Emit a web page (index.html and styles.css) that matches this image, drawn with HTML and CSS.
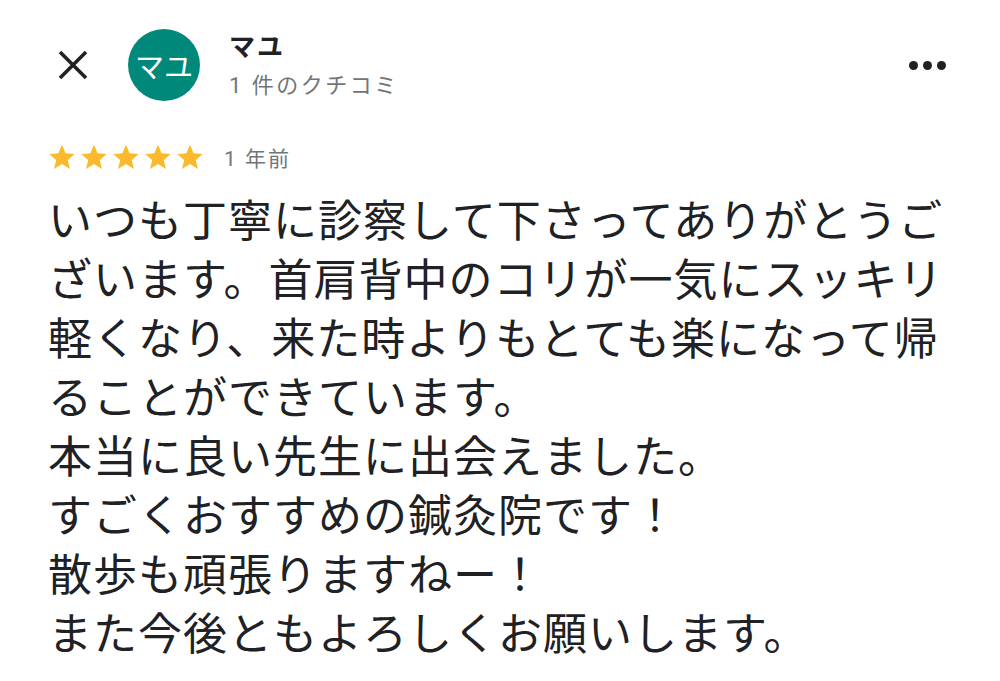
FILE: index.html
```html
<!DOCTYPE html>
<html lang="ja">
<head>
    <meta charset="utf-8">
    <title>クチコミ</title>
    <link rel="stylesheet" href="styles.css">
</head>
<body>
    <!-- ヘッダー -->
    <div class="header">
        <svg class="close" viewBox="0 0 30 30" width="30" height="30">
            <path d="M2 2 L28 28 M28 2 L2 28" stroke="#222" stroke-width="3.6" fill="none"/>
        </svg>
        <div class="avatar">マユ</div>
        <div class="user">
            <div class="name">マユ</div>
            <div class="count">1 件のクチコミ</div>
        </div>
        <div class="more">
            <span></span><span></span><span></span>
        </div>
    </div>

    <!-- 評価 -->
    <div class="rating">
        <div class="stars">
            <svg viewBox="0 0 24 24"><path d="M12 1.5l3.1 7.2 7.8.7-5.9 5.1 1.8 7.7L12 18.1l-6.8 4.1 1.8-7.7-5.9-5.1 7.8-.7z"/></svg>
            <svg viewBox="0 0 24 24"><path d="M12 1.5l3.1 7.2 7.8.7-5.9 5.1 1.8 7.7L12 18.1l-6.8 4.1 1.8-7.7-5.9-5.1 7.8-.7z"/></svg>
            <svg viewBox="0 0 24 24"><path d="M12 1.5l3.1 7.2 7.8.7-5.9 5.1 1.8 7.7L12 18.1l-6.8 4.1 1.8-7.7-5.9-5.1 7.8-.7z"/></svg>
            <svg viewBox="0 0 24 24"><path d="M12 1.5l3.1 7.2 7.8.7-5.9 5.1 1.8 7.7L12 18.1l-6.8 4.1 1.8-7.7-5.9-5.1 7.8-.7z"/></svg>
            <svg viewBox="0 0 24 24"><path d="M12 1.5l3.1 7.2 7.8.7-5.9 5.1 1.8 7.7L12 18.1l-6.8 4.1 1.8-7.7-5.9-5.1 7.8-.7z"/></svg>
        </div>
        <span class="date">1 年前</span>
    </div>

    <!-- 本文 -->
    <div class="review">いつも丁寧に診察して下さってありがとうございます。首肩背中のコリが一気にスッキリ軽くなり、来た時よりもとても楽になって帰ることができています。<br>本当に良い先生に出会えました。<br>すごくおすすめの鍼灸院です！<br>散歩も頑張りますねー！<br>また今後ともよろしくお願いします。</div>
</body>
</html>
```

FILE: styles.css
```css
body {
    margin: 0;
    padding: 0;
    background-color: #fff;
    color: #202124;
    font-family: Roboto, "Noto Sans CJK JP", sans-serif;
}
.header {
    display: flex;
    align-items: center;
    padding: 28px 54px 0 58px;
}
.close {
    flex: 0 0 auto;
    margin-right: 40px;
}
.avatar {
    width: 72px;
    height: 72px;
    border-radius: 50%;
    background-color: #00897b;
    color: #fff;
    font-size: 29px;
    display: flex;
    align-items: center;
    justify-content: center;
    flex: 0 0 auto;
}
.user {
    margin-left: 29px;
    flex: 1;
    align-self: flex-start;
}
.name {
    font-size: 26px;
    font-weight: bold;
    letter-spacing: 2px;
    line-height: 34px;
    margin-top: 2px;
}
.count {
    font-size: 22px;
    color: #70757a;
    letter-spacing: 2.5px;
    line-height: 32px;
    margin-top: 6px;
}
.more {
    display: flex;
    gap: 5px;
    align-items: center;
}
.more span {
    width: 9px;
    height: 9px;
    border-radius: 50%;
    background-color: #202124;
}
.rating {
    display: flex;
    align-items: center;
    padding: 0 48px;
    margin-top: 40px;
}
.stars {
    display: flex;
    gap: 4px;
}
.stars svg {
    width: 28px;
    height: 28px;
    fill: #fbb92c;
}
.date {
    margin-left: 20px;
    font-size: 21px;
    color: #70757a;
    letter-spacing: 2px;
}
.review {
    width: 910px;
    padding: 0 48px;
    margin-top: 17px;
    font-size: 44px;
    line-height: 59px;
    letter-spacing: 1px;
    font-family: "Noto Sans CJK JP", sans-serif;
}
```
